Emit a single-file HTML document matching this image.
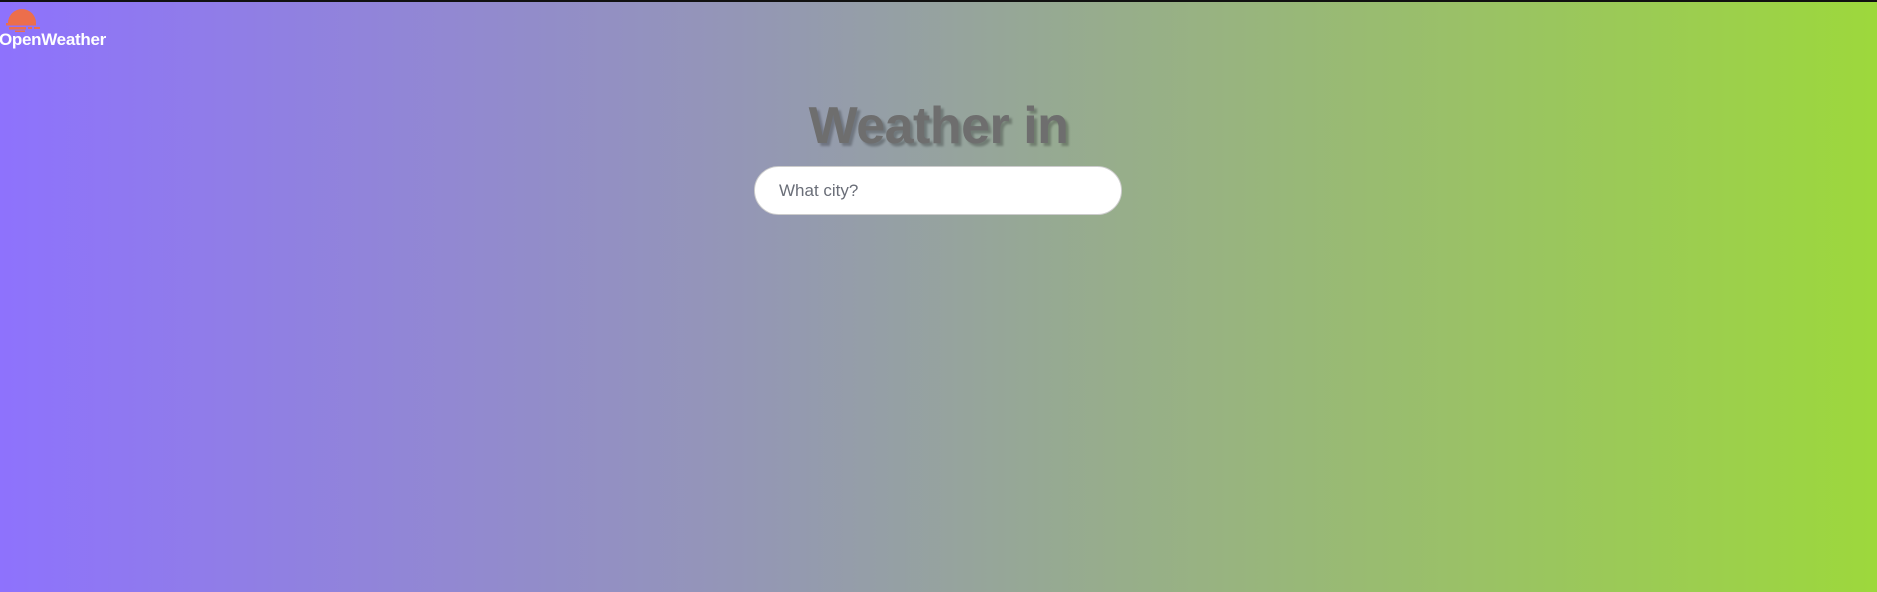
<!DOCTYPE html>
<html><head><meta charset="utf-8"><style>
html,body{margin:0;padding:0}
body{width:1877px;height:592px;overflow:hidden;position:relative;
background:linear-gradient(90deg,#8e72fd 0%,#9497b5 40%,#97ae8a 60%,#9dd83c 100%);
font-family:"Liberation Sans",sans-serif;border-top:2px solid #111;box-sizing:border-box}
.logo{position:absolute;left:0;top:0}
.logo span{position:absolute;left:-1px;top:28px;color:#fff;font-weight:bold;font-size:17px;letter-spacing:-0.3px;white-space:nowrap}
h1{position:absolute;left:0;width:1877px;top:94px;margin:0;text-align:center;font-size:52px;font-weight:bold;color:#6e6e6e;text-shadow:3px 3px 2px rgba(0,0,0,0.25);letter-spacing:-0.5px}
.inp{position:absolute;left:754px;top:164px;width:368px;height:49px;background:#fff;border-radius:25px;border:1px solid #ccc;box-sizing:border-box}
.inp span{position:absolute;left:24px;top:14px;font-size:17px;color:#6a6e78}
</style></head><body>
<div class="logo">
<svg width="50" height="32" style="position:absolute;left:0;top:0">
<path d="M8 21 A14 14 0 0 1 36 21 Z" fill="#ec6e4c"/>
<rect x="6" y="21" width="30" height="2.5" fill="#ec6e4c"/>
<rect x="9" y="25" width="17" height="2.5" fill="#ec6e4c"/>
<rect x="28" y="25" width="4" height="2" fill="#ec6e4c"/>
<rect x="34" y="25" width="6" height="2" fill="#ec6e4c"/>
<rect x="15" y="28.5" width="10" height="1.5" fill="#ec6e4c"/>
</svg>
<span>OpenWeather</span></div>
<h1>Weather in</h1>
<div class="inp"><span>What city?</span></div>
</body></html>
